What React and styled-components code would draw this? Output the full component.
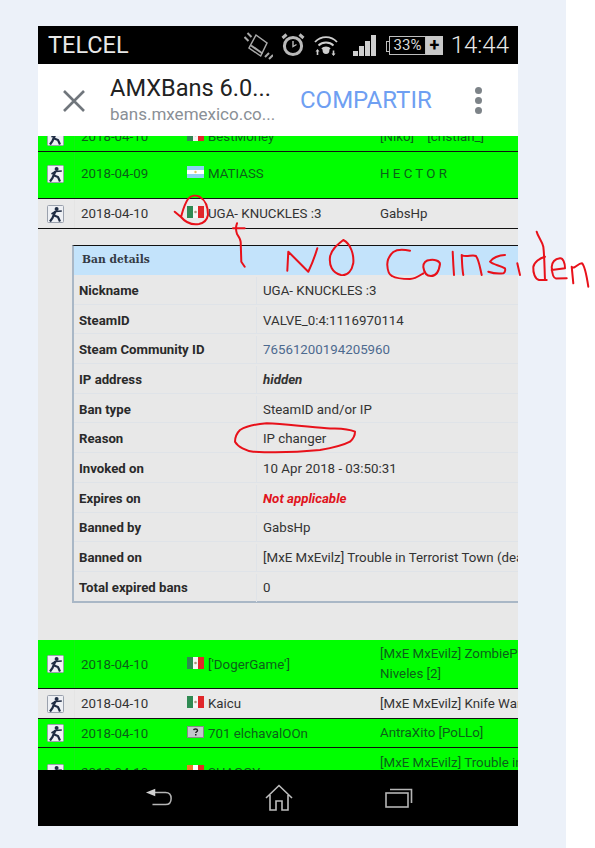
import React from 'react';
import styled, { createGlobalStyle } from 'styled-components';

const Global = createGlobalStyle`
  html, body { margin: 0; padding: 0; background: #fff; }
  body { font-family: Roboto, "Liberation Sans", sans-serif; }
  * { box-sizing: border-box; }
`;

const Page = styled.div`
  position: relative;
  width: 595px;
  height: 848px;
  overflow: hidden;
  background: #fff;
`;
const Panel = styled.div`
  width: 566px;
  height: 848px;
  background: #ecf1f9;
  padding: 26px 0 0 38px;
`;
const Phone = styled.div`
  width: 480px;
  height: 800px;
  display: flex;
  flex-direction: column;
  background: #000;
`;
const StatusBar = styled.div`
  height: 38px;
  flex: none;
  background: #000;
  display: flex;
  align-items: center;
  padding: 0 9px 0 10px;
  color: #e4e4e4;
`;
const Carrier = styled.span`
  font-size: 23.5px;
  font-weight: 400;
  color: #e8e8e8;
  width: 196px;
`;
const StatusIcons = styled.div`
  display: flex;
  align-items: center;
  flex: 1;
`;
const Battery = styled.div`
  display: flex;
  align-items: center;
  height: 20px;
  margin-left: 13px;
`;
const BatteryBody = styled.div`
  position: relative;
  width: 37px;
  height: 19px;
  border: 1px solid #bdbdbd;
  font-size: 15px;
  line-height: 17px;
  text-align: center;
  color: #d8d8d8;
  &::before {
    content: "";
    position: absolute;
    left: -4px;
    top: 4px;
    width: 3px;
    height: 9px;
    border: 1px solid #bdbdbd;
    border-right: none;
  }
`;
const Plus = styled.div`
  width: 17px;
  height: 19px;
  background: #c8c8c8;
  color: #000;
  font-size: 18px;
  font-weight: 700;
  line-height: 18px;
  text-align: center;
`;
const Clock = styled.span`
  font-size: 24px;
  font-weight: 300;
  color: #e8e8e8;
  margin-left: auto;
`;
const Header = styled.div`
  height: 72px;
  flex: none;
  background: #fff;
  display: flex;
  align-items: center;
  padding: 0 0 0 24px;
`;
const CloseBox = styled.div`
  width: 48px;
  flex: none;
  display: flex;
  margin-top: 1px;
`;
const Titles = styled.div`
  width: 190px;
  flex: none;
  display: flex;
  flex-direction: column;
  margin-top: -2px;
`;
const Title = styled.div`
  font-size: 23.6px;
  line-height: 30px;
  color: #222;
  white-space: nowrap;
`;
const Sub = styled.div`
  font-size: 17px;
  line-height: 23px;
  color: #8a8f96;
  white-space: nowrap;
`;
const Share = styled.div`
  font-size: 24px;
  color: #6f9ff2;
  width: 133px;
  flex: none;
  white-space: nowrap;
`;
const Dots = styled.div`
  margin-left: 42px;
  display: flex;
  flex-direction: column;
  gap: 3px;
  span { width: 7px; height: 7px; border-radius: 50%; background: #7d8388; display: block; }
`;
const Viewport = styled.div`
  flex: 1;
  min-height: 0;
  overflow: hidden;
  background: #e8e8e8;
  color: #333;
  font-size: 13.3px;
`;
const Scroller = styled.div`
  margin-top: -14px;
`;
const Row = styled.div`
  display: grid;
  grid-template-columns: 37px 106px 199px 1fr;
  height: ${(p) => p.$h}px;
  padding-bottom: ${(p) => p.$lift || 0}px;
  background: ${(p) => (p.$green ? '#00ff00' : '#e9e9e9')};
  color: ${(p) => (p.$green ? '#0c5f1a' : '#333')};
  border-bottom: ${(p) => (p.$noLine ? 'none' : '1px solid #111')};
`;
const Cell = styled.div`
  display: flex;
  align-items: center;
  padding-left: ${(p) => p.$pad || 0}px;
  white-space: nowrap;
  overflow: hidden;
`;
const IconCell = styled(Cell)`
  padding-left: 9px;
  border-right: 1px solid ${(p) => (p.$green ? '#12f012' : '#e4e4e4')};
`;
const Server = styled.div`
  align-self: center;
  line-height: 20px;
  white-space: pre;
  overflow: hidden;
`;
const FlagBox = styled.span`
  display: inline-flex;
  width: 17px;
  height: 12px;
  margin-right: 4px;
  margin-top: -3px;
  flex: none;
`;
const Details = styled.div`
  height: 411px;
  padding: 16px 0 37px 34px;
  background: #e8e8e8;
  border-bottom: 1px solid #e8e8e8;
`;
const Table = styled.div`
  border-top: 1px solid #111;
  border-left: 2px solid #a9b7c6;
  border-bottom: 2px solid #a9b7c6;
  height: 358px;
`;
const TableHead = styled.div`
  height: 29px;
  background: #c3e3fb;
  font-family: "DejaVu Serif", "Liberation Serif", serif;
  font-size: 10.7px;
  font-weight: 700;
  line-height: 28px;
  padding-left: 8px;
  color: #333a44;
`;
const DetailRow = styled.div`
  display: grid;
  grid-template-columns: 183px 1fr;
  height: 29.7px;
  padding-top: 2px;
  border-bottom: 1px solid #dfe3e8;
  &:last-child { border-bottom: none; }
`;
const Label = styled.div`
  font-weight: 700;
  font-size: 13.2px;
  color: #2a2a2a;
  display: flex;
  align-items: center;
  padding-left: 5px;
  border-right: 1px solid #dfe3e8;
`;
const Value = styled.div`
  display: flex;
  align-items: center;
  padding-left: 6px;
  white-space: nowrap;
  overflow: hidden;
  color: ${(p) => p.$color || '#333'};
  font-weight: ${(p) => (p.$em ? 700 : 400)};
  font-style: ${(p) => (p.$em ? 'italic' : 'normal')};
`;
const NavBar = styled.div`
  height: 56px;
  flex: none;
  background: #000;
  display: grid;
  grid-template-columns: repeat(3, 120px);
  align-items: center;
  padding-left: 107px;
`;
const Ink = styled.svg`
  position: absolute;
  inset: 0;
  width: 595px;
  height: 848px;
  pointer-events: none;
  fill: none;
  stroke: #e8111a;
  stroke-width: 2;
  stroke-linecap: round;
  stroke-linejoin: round;
`;

const CsIcon = () => (
  <svg width="17" height="18" viewBox="0 0 17 18">
    <rect x="0.5" y="0.5" width="16" height="17" rx="1" fill="#eef0f4" stroke="#9aa1ad" />
    <circle cx="9.6" cy="4" r="2" fill="#1f2c44" />
    <path d="M8.500 6.200L6.500 10.500L5.500 13L3 16.500M7.200 10.500L11 12L13 16.500" fill="none" stroke="#1f2c44" strokeWidth="2.200" />
    <path d="M8.500 6.500L14.800 6M8.500 6.500L4.500 9" fill="none" stroke="#1f2c44" strokeWidth="1.600" />
  </svg>
);

const Flag = ({ kind }) => {
  if (kind === 'ar') {
    return (
      <svg width="17" height="12" viewBox="0 0 17 12">
        <rect width="17" height="12" fill="#fff" />
        <rect width="17" height="4" fill="#8fd0f2" />
        <rect y="8" width="17" height="4" fill="#8fd0f2" />
        <circle cx="8.500" cy="6" r="1.200" fill="#e9c65a" />
      </svg>
    );
  }
  if (kind === 'unk') {
    return (
      <svg width="17" height="12" viewBox="0 0 17 12">
        <rect x="0.500" y="0.500" width="16" height="11" fill="#c4c6cc" stroke="#888" />
        <path d="M6.600 4.200c.2-1.600 3.800-1.800 3.900.2 0 1.400-1.700 1.300-1.700 2.600" fill="none" stroke="#222" strokeWidth="1.400" />
        <rect x="8" y="8" width="1.500" height="1.500" fill="#222" />
      </svg>
    );
  }
  if (kind === 'orange') {
    return (
      <svg width="17" height="12" viewBox="0 0 17 12">
        <rect width="6" height="12" fill="#ef7a2a" />
        <rect x="6" width="5" height="12" fill="#fff" />
        <rect x="11" width="6" height="12" fill="#df2b24" />
      </svg>
    );
  }
  return (
    <svg width="17" height="12" viewBox="0 0 17 12">
      <rect width="6" height="12" fill="#2f8a52" />
      <rect x="6" width="5" height="12" fill="#f5f5f5" />
      <rect x="11" width="6" height="12" fill="#e0262a" />
      <circle cx="8.500" cy="6" r="1.300" fill="#a9987a" />
    </svg>
  );
};

const TableRow = ({ h, lift, green, noLine, date, flag, name, server }) => (
  <Row $h={h} $lift={lift} $green={green} $noLine={noLine}>
    <IconCell $green={green}><CsIcon /></IconCell>
    <Cell $pad={6}>{date}</Cell>
    <Cell $pad={6}>
      <FlagBox><Flag kind={flag} /></FlagBox>
      {name}
    </Cell>
    <Server>{server}</Server>
  </Row>
);

const details = [
  ['Nickname', 'UGA- KNUCKLES :3'],
  ['SteamID', 'VALVE_0:4:1116970114'],
  ['Steam Community ID', '76561200194205960', { color: '#4d6a8f' }],
  ['IP address', 'hidden', { em: true, color: '#333' }],
  ['Ban type', 'SteamID and/or IP'],
  ['Reason', 'IP changer'],
  ['Invoked on', '10 Apr 2018 - 03:50:31'],
  ['Expires on', 'Not applicable', { em: true, color: '#e0141c' }],
  ['Banned by', 'GabsHp'],
  ['Banned on', '[MxE MxEvilz] Trouble in Terrorist Town (dead)'],
  ['Total expired bans', '0'],
];

const ink = [
  'M174.7 211.7L181 217C183 210 184 205 188 199C191 195 196 195 200 197C205 200 208 207 208 215C207 220 204 223 199 224C193 225 186 223 181 217',
  'M233 228.3L244.7 228.3',
  'M237 223.3C235.5 227 236 231 237 234C239 237 240.5 239 240.7 242L241.3 261.7L244.7 266.7',
  'M287.3 270.7L288.3 251.7L308.3 271.7C312 264 315 256 317.3 248.3',
  'M343.3 240C337 245 331 250 330 257C329 265 332 273 341 275C348 276 352 270 353.3 263C354 255 351 244 343.3 240',
  'M410 250.7C402 249 396 250 393.3 252C389 256 387 260 387.3 265C387.5 270 388 274 392 276C397 279 404 279 410 279C415 279 419 276 423.3 273.3',
  'M430 260C426 260 423 263 423.3 267C424 272 426 276 431 276C436 276 439 271 440 264C440 261 434 259 430 260',
  'M452.7 251.7C453 259 453.5 268 454 275',
  'M463.3 275C462 268 462 260 461.7 255C466 258 472 254 476 256C479 260 480 268 481.7 275',
  'M505 255C499 255 492 258 490 261.7C493 265 500 265 505 268.3C506 271 504 273 503.3 273.3C498 274 492 273 488.3 271.7',
  'M517.3 263.3L520 275',
  'M536.7 231.7C538 237 542 241 543.3 246.7C544.5 256 544.5 270 545 280',
  'M545 256.7C540 258 534 262 533.3 267C533 273 535 279 539 280L546.7 280',
  'M551.7 270L565 268.3C565 263 563 258 560 258.3C555 259 552 262 551.7 267C552 273 553 278 556 278.5L566.7 278.3',
  'M573.3 283.3L571.7 266.7C574 270 578 263 582 263.3C585 266 587 278 588.3 286.7',
  'M260 424C252 425 245 427 240 430C237 433 235 437 235 441.7C238 447 246 451 253.3 451.7C275 453 300 452 320 450C332 448 342 446 350 441.7C353 439 355 435 355 431.7C346 428 338 429 326.7 428.3C306 427 285 424 266.7 423.3L260 424',
];

export default function App() {
  return (
    <Page>
      <Global />
      <Panel>
        <Phone>
          <StatusBar>
            <Carrier>TELCEL</Carrier>
            <StatusIcons>
              <svg width="29" height="32" viewBox="0 0 29 32" fill="none" stroke="#a9a9a9" strokeWidth="1.500">
                <path d="M12 6l11 8-6.300 13L5 19z" />
                <path d="M7 16.500l11.500 8" strokeWidth="2" />
                <path d="M0.500 8l4 4M3.500 4l4 4M21 28l4-4M25 30l4-4" strokeWidth="2" />
              </svg>
              <svg style={{ marginLeft: 8 }} width="24" height="26" viewBox="0 0 24 26" fill="none" stroke="#b9b9b9">
                <circle cx="12" cy="14" r="8.600" strokeWidth="3" />
                <path d="M12 9v5.500l3.500-2" strokeWidth="1.400" />
                <path d="M1.500 6l4-3.500M22.500 6l-4-3.500" strokeWidth="3" />
              </svg>
              <svg style={{ marginLeft: 9 }} width="24" height="24" viewBox="0 0 24 24" fill="none" stroke="#cfcfcf" strokeWidth="1.800">
                <path d="M1 9c6-6.500 16-6.500 22 0M4.500 12.500c4-4 11-4 15 0M8 16c2-2 6-2 8 0" />
                <circle cx="12" cy="17.500" r="3.400" fill="#cfcfcf" stroke="none" />
                <path d="M3.500 22v-4M19.500 17.500v4" strokeWidth="1.600" />
                <path d="M1.500 18.500l2-2.500 2 2.500zM17.500 20.500l2 2.500 2-2.500z" fill="#cfcfcf" stroke="none" />
              </svg>
              <svg style={{ marginLeft: 15 }} width="23" height="22" viewBox="0 0 23 22">
                <rect x="0" y="17" width="5" height="5" fill="#cfcfcf" />
                <rect x="6" y="12" width="5" height="10" fill="#cfcfcf" />
                <rect x="12" y="7" width="5" height="15" fill="#cfcfcf" />
                <rect x="18" y="1" width="5" height="21" fill="#cfcfcf" />
              </svg>
              <Battery>
                <BatteryBody>33%</BatteryBody>
                <Plus>+</Plus>
              </Battery>
              <Clock>14:44</Clock>
            </StatusIcons>
          </StatusBar>
          <Header>
            <CloseBox>
              <svg width="24" height="24" viewBox="0 0 24 24" fill="none" stroke="#70767c" strokeWidth="2.600">
                <path d="M2 2l20 20M22 2L2 22" />
              </svg>
            </CloseBox>
            <Titles>
              <Title>AMXBans 6.0...</Title>
              <Sub>bans.mxemexico.co...</Sub>
            </Titles>
            <Share>COMPARTIR</Share>
            <Dots><span /><span /><span /></Dots>
          </Header>
          <Viewport>
            <Scroller>
              <TableRow h={30} green date="2018-04-10" flag="mx" name="BestMoney" server={'[Niko]    [cristian_]'} />
              <TableRow h={47} lift={3} green date="2018-04-09" flag="ar" name="MATIASS" server="H E C T O R" />
              <TableRow h={30} date="2018-04-10" flag="mx" name="UGA- KNUCKLES :3" server="GabsHp" />
              <Details>
                <Table>
                  <TableHead>Ban details</TableHead>
                  {details.map(([label, value, opt]) => (
                    <DetailRow key={label}>
                      <Label>{label}</Label>
                      <Value $color={opt?.color} $em={opt?.em}>{value}</Value>
                    </DetailRow>
                  ))}
                </Table>
              </Details>
              <TableRow h={49} green date="2018-04-10" flag="mx" name="['DogerGame']" server={'[MxE MxEvilz] ZombiePlague\nNiveles [2]'} />
              <TableRow h={30} date="2018-04-10" flag="mx" name="Kaicu" server="[MxE MxEvilz] Knife War" />
              <TableRow h={29} green date="2018-04-10" flag="unk" name="701 elchavalOOn" server="AntraXito [PoLLo]" />
              <TableRow h={49} green noLine date="2018-04-10" flag="orange" name="SHAGGY :v" server={'[MxE MxEvilz] Trouble in\nTerrorist Town'} />
            </Scroller>
          </Viewport>
          <NavBar>
            <svg width="28" height="22" viewBox="0 0 30 22" fill="none" stroke="#b5b5b5" strokeWidth="1.600">
              <path d="M10 5h12c4 0 6 2.500 6 6.500S26 18 22 18H8" />
              <path d="M1 5l10-4v8z" fill="#d0d0d0" stroke="none" />
            </svg>
            <svg width="28" height="28" viewBox="0 0 28 28" fill="none" stroke="#bdbdbd" strokeWidth="1.600">
              <path d="M1 14L14 1.500 27 14M5 11v15h6v-9h6v9h6V11" />
            </svg>
            <svg width="28" height="20" viewBox="0 0 28 20" fill="none" stroke="#b5b5b5" strokeWidth="1.600">
              <rect x="1" y="5" width="22" height="14" />
              <path d="M5 1.500h21.500V15" />
            </svg>
          </NavBar>
        </Phone>
      </Panel>
      <Ink viewBox="0 0 595 848">
        {ink.map((d) => <path key={d} d={d} />)}
      </Ink>
    </Page>
  );
}
